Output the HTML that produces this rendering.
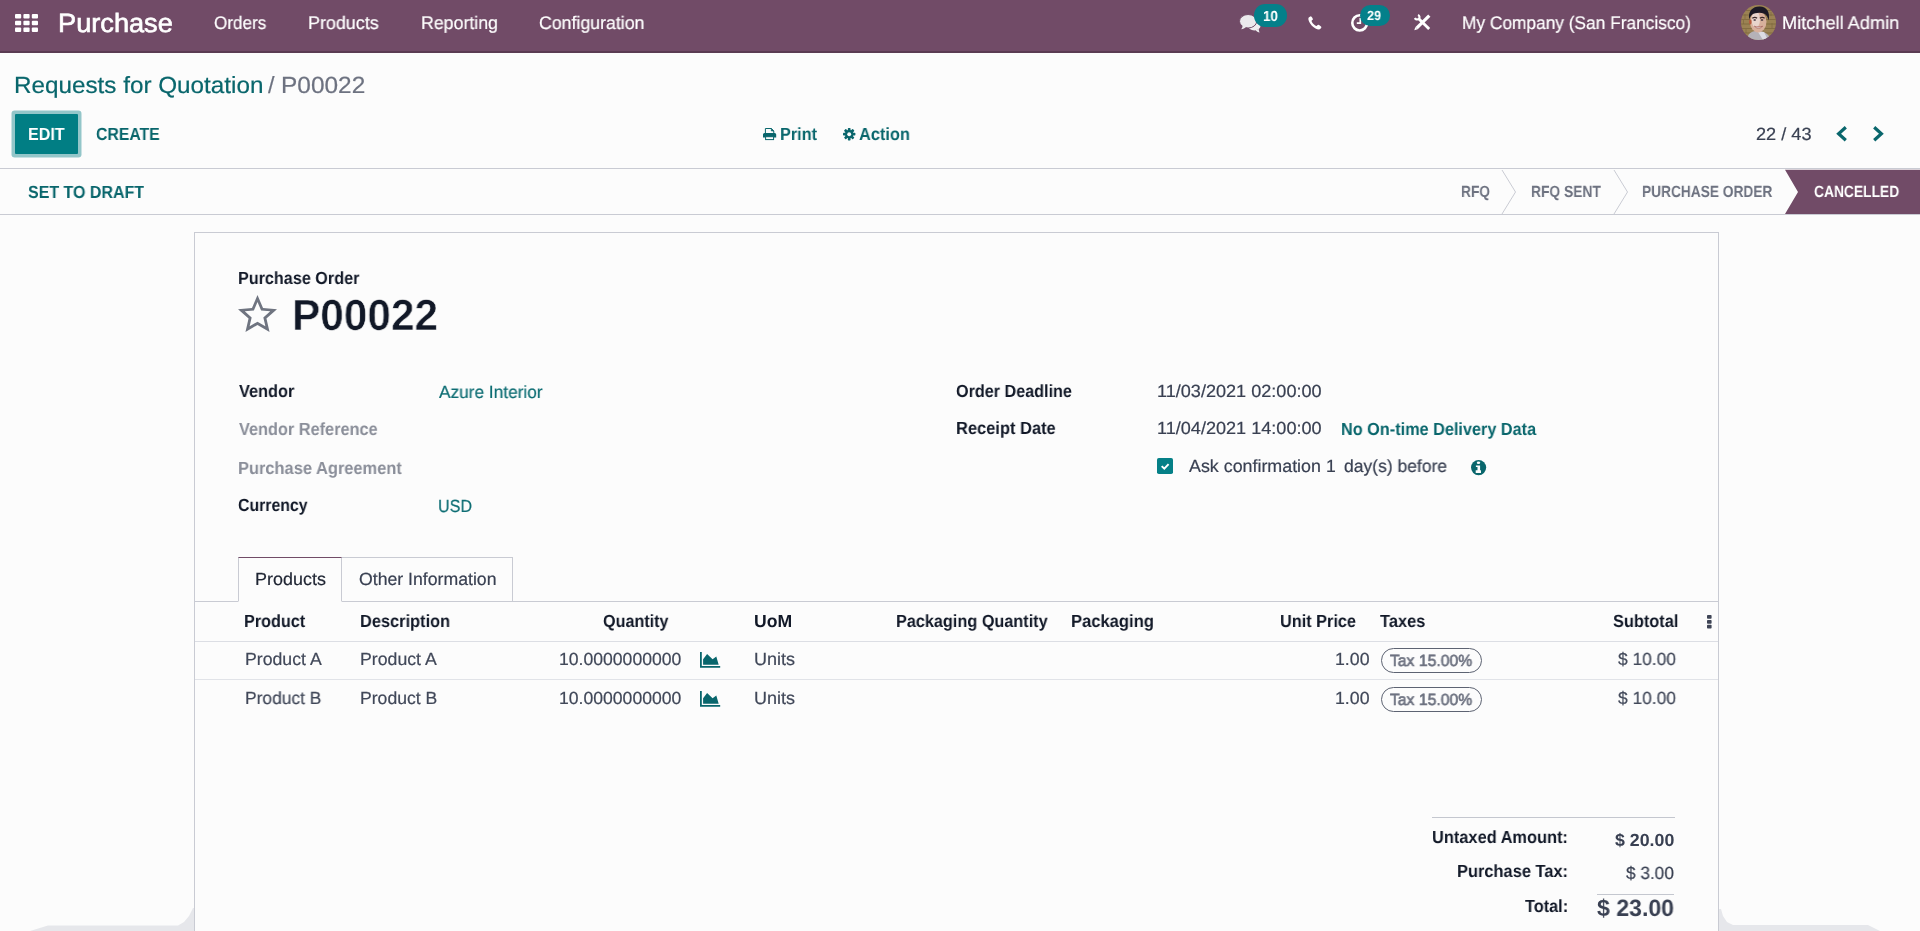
<!DOCTYPE html>
<html lang="en">
<head>
<meta charset="utf-8">
<title>Odoo - P00022</title>
<style>
*{box-sizing:border-box;margin:0;padding:0}
html,body{width:1920px;height:931px;overflow:hidden}
body{position:relative;background:#fcfcfc;font-family:"Liberation Sans",sans-serif;color:#3f4556}
.t{position:absolute;white-space:nowrap;line-height:1.2;font-weight:400;font-kerning:normal;text-rendering:geometricPrecision;transform-origin:0 0;-webkit-text-stroke:.2px currentColor;will-change:transform}
.m{font-weight:700}
.m,.b{-webkit-text-stroke:0}
#edit,#s4,#b10,#b29{-webkit-text-stroke:0}
.h{-webkit-text-stroke:.65px currentColor}
#name{-webkit-text-stroke:.55px #fcfcfc}
.b{font-weight:700}
.abs{position:absolute}
svg{position:absolute;overflow:visible}
/* navbar */
.navbar-bg{position:absolute;left:0;top:0;width:1920px;height:53px;background:#714b67;border-bottom:2px solid #5a3b52}
/* control panel */
.cp-bg{position:absolute;left:0;top:53px;width:1920px;height:116px;border-bottom:1px solid #c9cbd3}
.btn-edit{position:absolute;left:15px;top:114px;width:63px;height:40px;background:#017e84;border-radius:1px;box-shadow:0 0 0 3.5px #93c6c9}
/* status bar */
.statusbar-bg{position:absolute;left:0;top:169px;width:1920px;height:46px;border-bottom:1px solid #c9cbd3}
/* sheet */
.sheet-bg{position:absolute;left:194px;top:232px;width:1525px;height:720px;border:1px solid #c9cbd3;background:#fcfcfc}
.tabline{position:absolute;left:195px;top:601px;width:1523px;height:1px;background:#c9cbd3}
.tab{position:absolute;top:557px;height:45px;border:1px solid #c9cbd3}
.tab.active{left:238px;width:104px;border-top-color:#714b67;border-bottom-color:#fcfcfc;background:#fcfcfc}
.tab.other{left:341px;width:172px}
.hline{position:absolute;left:195px;width:1523px;height:1px;background:#e1e3e8}
.pill{position:absolute;left:1381px;width:101px;height:25px;border:1px solid #5d6372;border-radius:13px}
.check{position:absolute;left:1157.250px;top:458px;width:16.100px;height:16.100px;background:#058087;border-radius:1.800px}
.tot-line{position:absolute;height:1px;background:#c4c7cf}
#brand{left:57.77px;top:7.61px;font-size:26.4px;transform:scaleX(1.0299);color:#ffffff}
#m1{left:213.79px;top:12.41px;font-size:18.3px;transform:scaleX(0.9347);color:#ffffff}
#m2{left:307.93px;top:12.41px;font-size:18.3px;transform:scaleX(0.9801);color:#ffffff}
#m3{left:420.54px;top:12.41px;font-size:18.3px;transform:scaleX(0.9713);color:#ffffff}
#m4{left:538.70px;top:12.41px;font-size:18.3px;transform:scaleX(0.9697);color:#ffffff}
#b10{left:1262.85px;top:8.90px;font-size:14.6px;transform:scaleX(0.9242);color:#ffffff}
#b29{left:1367.46px;top:7.51px;font-size:13.3px;transform:scaleX(0.9464);color:#ffffff}
#comp{left:1462.18px;top:11.60px;font-size:18.3px;transform:scaleX(0.9466);color:#ffffff}
#user{left:1782.01px;top:11.60px;font-size:18.3px;transform:scaleX(0.9942);color:#ffffff}
#bc1{left:13.61px;top:71.40px;font-size:23.4px;transform:scaleX(1.0367);color:#09666c}
#bc2{left:267.60px;top:71.40px;font-size:23.4px;color:#6d7280}
#bc3{left:280.60px;top:71.40px;font-size:23.4px;transform:scaleX(1.0444);color:#6d7280}
#edit{left:27.52px;top:124.40px;font-size:17.6px;transform:scaleX(0.9145);color:#ffffff}
#create{left:96.35px;top:124.40px;font-size:17.6px;transform:scaleX(0.8963);color:#09666c}
#print{left:779.71px;top:124.01px;font-size:17.6px;transform:scaleX(0.9228);color:#09666c}
#action{left:859.09px;top:124.01px;font-size:17.6px;transform:scaleX(0.9304);color:#09666c}
#pager{left:1756.09px;top:123.81px;font-size:17.6px;transform:scaleX(1.0316);color:#394052}
#draft{left:27.79px;top:181.81px;font-size:17.6px;transform:scaleX(0.9093);color:#09666c}
#s1{left:1461.08px;top:182.91px;font-size:16.2px;transform:scaleX(0.8486);color:#6d7280}
#s2{left:1531.08px;top:182.91px;font-size:16.2px;transform:scaleX(0.8531);color:#6d7280}
#s3{left:1642.33px;top:182.91px;font-size:16.2px;transform:scaleX(0.8481);color:#6d7280}
#s4{left:1813.68px;top:182.91px;font-size:16.2px;transform:scaleX(0.8529);color:#ffffff}
#po{left:237.67px;top:268.26px;font-size:17.6px;transform:scaleX(0.9190);color:#111827}
#name{left:292.46px;top:289.81px;font-size:43.6px;transform:scaleX(0.9722);color:#111827}
#l1{left:238.64px;top:381.10px;font-size:17.6px;transform:scaleX(0.9282);color:#111827}
#v1{left:439.22px;top:382.01px;font-size:17.6px;transform:scaleX(0.9807);color:#0d6d73}
#l2{left:238.64px;top:419.01px;font-size:17.6px;transform:scaleX(0.9269);color:#8a8e99}
#l3{left:237.65px;top:457.90px;font-size:17.6px;transform:scaleX(0.9341);color:#8a8e99}
#l4{left:238.10px;top:495.01px;font-size:17.6px;transform:scaleX(0.8995);color:#111827}
#v4{left:438.01px;top:496.31px;font-size:17.6px;transform:scaleX(0.9154);color:#0d6d73}
#l5{left:956.34px;top:381.10px;font-size:17.6px;transform:scaleX(0.9193);color:#111827}
#v5{left:1156.87px;top:381.10px;font-size:17.6px;transform:scaleX(1.0279);color:#394052}
#l6{left:955.90px;top:418.31px;font-size:17.6px;transform:scaleX(0.9351);color:#111827}
#v6{left:1156.87px;top:418.31px;font-size:17.6px;transform:scaleX(1.0279);color:#394052}
#ontime{left:1340.81px;top:418.90px;font-size:17.6px;transform:scaleX(0.9237);color:#09666c}
#ask{left:1188.72px;top:456.21px;font-size:17.6px;transform:scaleX(1.0146);color:#394052}
#one{left:1325.66px;top:456.21px;font-size:17.6px;color:#394052}
#days{left:1343.66px;top:456.21px;font-size:17.6px;transform:scaleX(0.9948);color:#394052}
#t1{left:254.78px;top:569.01px;font-size:17.6px;transform:scaleX(1.0207);color:#1f2533}
#t2{left:358.66px;top:569.01px;font-size:17.6px;transform:scaleX(1.0042);color:#394052}
#h1{left:243.91px;top:611.01px;font-size:17.6px;transform:scaleX(0.9220);color:#111827}
#h2{left:360.15px;top:611.01px;font-size:17.6px;transform:scaleX(0.9309);color:#111827}
#h3{left:602.59px;top:611.01px;font-size:17.6px;transform:scaleX(0.9179);color:#111827}
#h4{left:753.95px;top:611.01px;font-size:17.6px;transform:scaleX(0.9895);color:#111827}
#h5{left:896.41px;top:611.01px;font-size:17.6px;transform:scaleX(0.9234);color:#111827}
#h6{left:1071.39px;top:611.01px;font-size:17.6px;transform:scaleX(0.9427);color:#111827}
#h7{left:1280.27px;top:611.01px;font-size:17.6px;transform:scaleX(0.9257);color:#111827}
#h8{left:1380.32px;top:611.01px;font-size:17.6px;transform:scaleX(0.9334);color:#111827}
#h9{left:1612.78px;top:611.01px;font-size:17.6px;transform:scaleX(0.9290);color:#111827}
#r1a{left:244.55px;top:648.65px;font-size:17.6px;transform:scaleX(1.0051);color:#414859}
#r1b{left:360.05px;top:648.51px;font-size:17.6px;transform:scaleX(1.0058);color:#414859}
#r1c{left:559.16px;top:648.51px;font-size:17.6px;color:#414859}
#r1d{left:754.11px;top:648.51px;font-size:17.6px;transform:scaleX(1.0236);color:#414859}
#r1e{left:1335.40px;top:648.51px;font-size:17.6px;transform:scaleX(1.0086);color:#414859}
#r1f{left:1390.40px;top:651.50px;font-size:16.2px;transform:scaleX(0.9713);color:#6d7280}
#r1g{left:1617.81px;top:648.51px;font-size:17.6px;transform:scaleX(0.9857);color:#414859}
#r2a{left:244.57px;top:687.76px;font-size:17.6px;transform:scaleX(0.9881);color:#414859}
#r2b{left:360.06px;top:687.76px;font-size:17.6px;transform:scaleX(0.9981);color:#414859}
#r2c{left:559.16px;top:687.76px;font-size:17.6px;color:#414859}
#r2d{left:754.11px;top:687.76px;font-size:17.6px;transform:scaleX(1.0236);color:#414859}
#r2e{left:1335.40px;top:687.76px;font-size:17.6px;transform:scaleX(1.0086);color:#414859}
#r2f{left:1390.40px;top:690.75px;font-size:16.2px;transform:scaleX(0.9713);color:#6d7280}
#r2g{left:1617.81px;top:687.76px;font-size:17.6px;transform:scaleX(0.9857);color:#414859}
#tl1{left:1432.32px;top:827.31px;font-size:17.6px;transform:scaleX(0.9314);color:#111827}
#tv1{left:1614.77px;top:829.81px;font-size:17.6px;transform:scaleX(1.0095);color:#394052}
#tl2{left:1457.20px;top:860.71px;font-size:17.6px;transform:scaleX(0.9336);color:#111827}
#tv2{left:1626.12px;top:862.81px;font-size:17.6px;transform:scaleX(0.9782);color:#394052}
#tl3{left:1525.12px;top:896.01px;font-size:17.6px;transform:scaleX(0.9261);color:#111827}
#tv3{left:1597.20px;top:894.81px;font-size:23.6px;transform:scaleX(0.9786);color:#394052}
</style>
</head>
<body>

<header class="navbar">
  <div class="navbar-bg"></div>
  <svg style="left:14.6px;top:13.6px" width="23" height="18" viewBox="0 0 23 18" fill="#fff">
    <rect x="0" y="0" width="6.2" height="4.6" rx="1"/><rect x="8.4" y="0" width="6.2" height="4.6" rx="1"/><rect x="16.8" y="0" width="6.2" height="4.6" rx="1"/>
    <rect x="0" y="6.7" width="6.2" height="4.6" rx="1"/><rect x="8.4" y="6.7" width="6.2" height="4.6" rx="1"/><rect x="16.8" y="6.7" width="6.2" height="4.6" rx="1"/>
    <rect x="0" y="13.4" width="6.2" height="4.6" rx="1"/><rect x="8.4" y="13.4" width="6.2" height="4.6" rx="1"/><rect x="16.8" y="13.4" width="6.2" height="4.6" rx="1"/>
  </svg>
  <span id="brand" class="t h">Purchase</span>
  <nav>
    <span id="m1" class="t">Orders</span>
    <span id="m2" class="t">Products</span>
    <span id="m3" class="t">Reporting</span>
    <span id="m4" class="t">Configuration</span>
  </nav>
  <!-- comments icon -->
  <svg style="left:1239.600px;top:14.600px" width="21" height="18" viewBox="0 0 21 18">
    <ellipse cx="14.300" cy="10.800" rx="6.300" ry="4.700" fill="#efedf0"/>
    <path d="M15.500 14.900c1.100 1.300 2.500 2.200 4.200 2.500-.7-.9-1-2-.9-3.400z" fill="#efedf0"/>
    <ellipse cx="8.100" cy="6.250" rx="8.600" ry="6.750" fill="#ebe9ec" stroke="#714b67" stroke-width="1"/>
    <path d="M2.700 10.300c-.1 1.600-.6 2.900-1.500 4 2-.3 3.700-1.200 5-2.500z" fill="#ebe9ec"/>
  </svg>
  <div class="abs" style="left:1253.900px;top:4.300px;width:33.300px;height:22.600px;border-radius:11.300px;background:#04808a"></div>
  <span id="b10" class="t b">10</span>
  <!-- phone -->
  <svg style="left:1308.400px;top:15.700px" width="13.800" height="13.800" viewBox="0 0 14 14" fill="#fff">
    <path d="M3 .3C2.300.3.600 1.300.4 2.400.1 4.200 1.300 7.100 3.900 9.800c2.700 2.700 5.700 4.100 7.500 3.800 1.100-.2 2.200-1.800 2.200-2.500 0-.4-2.500-2.100-3.100-2.200-.6-.1-1.300 1.200-1.900 1.200-.8 0-2.300-1.200-3.300-2.200s-1.800-2.300-1.700-3c.1-.6 1.400-1 1.400-1.600C5 2.800 3.500.3 3 .3z"/>
  </svg>
  <!-- clock -->
  <svg style="left:1351px;top:14px" width="17.400" height="17.800" viewBox="0 0 17.400 17.800" fill="none" stroke="#fff">
    <ellipse cx="8.700" cy="8.900" rx="7.400" ry="7.600" stroke-width="2.600"/>
    <path d="M9.300 4v5.200H5.800" stroke-width="1.700"/>
  </svg>
  <div class="abs" style="left:1359.500px;top:5px;width:30.800px;height:21px;border-radius:10.500px;background:#04808a"></div>
  <span id="b29" class="t b">29</span>
  <!-- tools -->
  <svg style="left:1413.500px;top:14.300px" width="17" height="16.500" viewBox="0 0 17 16.500" fill="none" stroke="#fff">
    <path d="M2.600 14.100L15.300 1.700" stroke-width="3.200"/>
    <path d="M.3 16.300l1.100-3.300 2.300 2.300z" fill="#fff" stroke="none"/>
    <path d="M4.500 4.500l10.700 10.500" stroke-width="2.900"/>
    <path d="M4 .9A2.400 2.400 0 1 1 .9 4" stroke-width="2.100"/>
  </svg>
  <span id="comp" class="t">My Company (San Francisco)</span>
  <!-- avatar -->
  <svg style="left:1741.200px;top:4.900px" width="35" height="35" viewBox="0 0 35 35">
    <defs><clipPath id="av"><circle cx="17.500" cy="17.500" r="17.500"/></clipPath></defs>
    <g clip-path="url(#av)">
      <rect width="35" height="35" fill="#9b8253"/>
      <path d="M0 5.500h35M0 10h35M0 14.500h35M0 19h35M0 23.500h35M0 28h35" stroke="#7c663d" stroke-width="1.100" opacity=".75"/>
      <path d="M4 9v5M30 7v4M2.500 15v4M31 18v5M5 24v4" stroke="#7c663d" stroke-width="1" opacity=".6"/>
      <path d="M6 35c.5-6 4-9.500 11-9.300 6 .2 11 3.300 13 9.300z" fill="#b5b2b8"/>
      <path d="M17 27l5 8h5l-4-8z" fill="#dcdce2"/>
      <ellipse cx="17.200" cy="16.600" rx="8.300" ry="10.800" fill="#d8b09c"/>
      <ellipse cx="14.800" cy="14.500" rx="4.200" ry="8" fill="#efe0dc" opacity=".75"/>
      <ellipse cx="9.300" cy="17" rx="1.300" ry="2.400" fill="#b8583c"/>
      <path d="M8.300 14.500C6.500 5.500 12.500 1 19 1.400c6.500.4 10.300 5 8.700 14.100-.8-3.500-2.200-5.900-4.400-6.800-4.300-1.600-9.800-.8-12 .9-1.600 1.300-2.400 2.900-3 4.900z" fill="#1c1924"/>
      <path d="M11.300 13.200c1.500-.9 3.500-.9 4.800 0M18.800 13.200c1.500-.9 3.500-.9 4.800 0" stroke="#3b2a2a" stroke-width="1.300" fill="none"/>
      <ellipse cx="13.700" cy="15" rx="1.300" ry=".8" fill="#2b2230"/><ellipse cx="21" cy="15" rx="1.300" ry=".8" fill="#2b2230"/>
      <path d="M13.300 21.200c2.300 2.600 6.300 2.600 8.300 0-2.500.9-5.800.9-8.300 0z" fill="#f4eeee" stroke="#9a4a44" stroke-width=".6"/>
    </g>
  </svg>
  <span id="user" class="t">Mitchell Admin</span>
</header>

<section class="control-panel">
<div class="cp-bg"></div>
<nav class="breadcrumb">
  <span id="bc1" class="t">Requests for Quotation</span>
  <span id="bc2" class="t">/</span>
  <span id="bc3" class="t">P00022</span>
</nav>
<div class="btn-edit"></div>
<span id="edit" class="t m">EDIT</span>
<span id="create" class="t m">CREATE</span>
<!-- printer -->
<svg style="left:762.600px;top:128.100px" width="13.200" height="12.100" viewBox="0 0 13.200 12.100" fill="#09666c" stroke="#09666c">
  <path d="M2.400 5.500V.5h5.900l2.500 2.500v2.500" fill="none" stroke-width="1"/>
  <path d="M8.300.5v2.500h2.500z" stroke-width=".6"/>
  <path d="M1.500 5h10.200a1.500 1.500 0 0 1 1.500 1.500v3H0v-3A1.500 1.500 0 0 1 1.500 5z" stroke="none"/>
  <rect x="2.600" y="8.700" width="8" height="2.900" fill="#fcfcfc" stroke-width="1"/>
</svg>
<span id="print" class="t m">Print</span>
<!-- gear -->
<svg style="left:843.150px;top:127.900px" width="12.400" height="12.400" viewBox="-6.200 -6.200 12.400 12.400">
  <g fill="#09666c">
    <circle r="4.100"/>
    <rect x="-1.350" y="-6.200" width="2.700" height="12.400" rx=".7"/>
    <rect x="-1.350" y="-6.200" width="2.700" height="12.400" rx=".7" transform="rotate(45)"/>
    <rect x="-1.350" y="-6.200" width="2.700" height="12.400" rx=".7" transform="rotate(90)"/>
    <rect x="-1.350" y="-6.200" width="2.700" height="12.400" rx=".7" transform="rotate(135)"/>
  </g>
  <circle r="1.950" fill="#fcfcfc"/>
</svg>
<span id="action" class="t m">Action</span>
<span id="pager" class="t">22 / 43</span>
<svg style="left:1836px;top:126px" width="12" height="15.500" viewBox="0 0 12 15.500" fill="none" stroke="#09666c" stroke-width="3.200"><path d="M9.800 1.200L2.600 7.750l7.200 6.550"/></svg>
<svg style="left:1872.400px;top:126px" width="12" height="15.500" viewBox="0 0 12 15.500" fill="none" stroke="#09666c" stroke-width="3.200"><path d="M2.200 1.200l7.200 6.550-7.200 6.550"/></svg>

</section>

<section class="statusbar">
<div class="statusbar-bg"></div>
<span id="draft" class="t m">SET TO DRAFT</span>
<svg style="left:0;top:169px" width="1920" height="46" viewBox="0 0 1920 46">
  <path d="M1502 1l13.500 22L1502 45" fill="none" stroke="#c9cbd3" stroke-width="1"/>
  <path d="M1614 1l13.500 22L1614 45" fill="none" stroke="#c9cbd3" stroke-width="1"/>
  <path d="M1785 .8h135V45h-135l13-22.100z" fill="#714b67"/>
</svg>
<span id="s1" class="t m">RFQ</span>
<span id="s2" class="t m">RFQ SENT</span>
<span id="s3" class="t m">PURCHASE ORDER</span>
<span id="s4" class="t m">CANCELLED</span>

</section>

<main class="sheet">
<div class="sheet-bg"></div>
<span id="po" class="t m">Purchase Order</span>
<!-- star -->
<svg style="left:238px;top:294.700px" width="39" height="37.100" viewBox="0 0 39 37.100" fill="#6f7480" fill-rule="evenodd">
  <path d="M19.50 0.00L25.03 12.90L39.00 14.17L28.44 23.40L31.55 37.08L19.50 29.90L7.45 37.08L10.56 23.40L0.00 14.17L13.97 12.90zM19.50 7.11L23.11 15.53L32.24 16.36L25.34 22.40L27.37 31.33L19.50 26.64L11.63 31.33L13.66 22.40L6.76 16.36L15.89 15.53z"/>
</svg>
<h1 id="name" class="t b">P00022</h1>

<div class="field-group">
<span id="l1" class="t m">Vendor</span><span id="v1" class="t">Azure Interior</span>
<span id="l2" class="t m">Vendor Reference</span>
<span id="l3" class="t m">Purchase Agreement</span>
<span id="l4" class="t m">Currency</span><span id="v4" class="t">USD</span>
<span id="l5" class="t m">Order Deadline</span><span id="v5" class="t">11/03/2021 02:00:00</span>
<span id="l6" class="t m">Receipt Date</span><span id="v6" class="t">11/04/2021 14:00:00</span>
<span id="ontime" class="t m">No On-time Delivery Data</span>
<div class="check"><svg style="left:0;top:0" width="16.100" height="16.100" viewBox="0 0 16.100 16.100" fill="none" stroke="#fff" stroke-width="2"><path d="M4.700 8.100l2.600 2.500 4.300-4.500"/></svg></div>
<span id="ask" class="t">Ask confirmation</span>
<span id="one" class="t">1</span>
<span id="days" class="t">day(s) before</span>
<!-- info -->
<svg style="left:1471.100px;top:459.750px" width="15.200" height="15.200" viewBox="0 0 15.200 15.200">
  <circle cx="7.600" cy="7.600" r="7.600" fill="#09666c"/>
  <ellipse cx="7.500" cy="2.850" rx="1.700" ry="1.250" fill="#fcfcfc"/>
  <path d="M4.900 5.400h4.200v4.800h.9v2.700H4.700v-2.700h1.800V7H4.900z" fill="#fcfcfc"/>
</svg>

</div>
<nav class="tabs">
<div class="tabline"></div>
<div class="tab other"></div>
<div class="tab active"></div>
<span id="t1" class="t">Products</span>
<span id="t2" class="t">Other Information</span>

</nav>
<div class="list-table" role="table">
<div class="thead" role="row">
<span id="h1" class="t m">Product</span>
<span id="h2" class="t m">Description</span>
<span id="h3" class="t m">Quantity</span>
<span id="h4" class="t m">UoM</span>
<span id="h5" class="t m">Packaging Quantity</span>
<span id="h6" class="t m">Packaging</span>
<span id="h7" class="t m">Unit Price</span>
<span id="h8" class="t m">Taxes</span>
<span id="h9" class="t m">Subtotal</span>
<svg style="left:1706.800px;top:614.500px" width="5" height="14" viewBox="0 0 5 14" fill="#3f4556"><rect width="4.600" height="3.800" rx=".8"/><rect y="4.900" width="4.600" height="3.800" rx=".8"/><rect y="9.800" width="4.600" height="3.800" rx=".8"/></svg>
<div class="hline" style="top:640.5px;height:1.500px;background:#dcdee4"></div>

</div>
<div class="row" role="row">
<span id="r1a" class="t">Product A</span>
<span id="r1b" class="t">Product A</span>
<span id="r1c" class="t">10.0000000000</span>
<svg style="left:700px;top:651.900px" width="20.200" height="15.700" viewBox="0 0 20.200 15.700" fill="#09666c"><path d="M0 0h1.800v14.100h18.400v1.600H0z"/><path d="M3.100 12.800V7.300l4-5.200 5.500 5.200 3.700-2.900 2.400 8.400z"/></svg>
<span id="r1d" class="t">Units</span>
<span id="r1e" class="t">1.00</span>
<div class="pill" style="top:647.5px"></div>
<span id="r1f" class="t h">Tax 15.00%</span>
<span id="r1g" class="t">$ 10.00</span>
<div class="hline" style="top:679px"></div>

</div>
<div class="row" role="row">
<span id="r2a" class="t">Product B</span>
<span id="r2b" class="t">Product B</span>
<span id="r2c" class="t">10.0000000000</span>
<svg style="left:700px;top:691.150px" width="20.200" height="15.700" viewBox="0 0 20.200 15.700" fill="#09666c"><path d="M0 0h1.800v14.100h18.400v1.600H0z"/><path d="M3.100 12.800V7.300l4-5.200 5.500 5.200 3.700-2.900 2.400 8.400z"/></svg>
<span id="r2d" class="t">Units</span>
<span id="r2e" class="t">1.00</span>
<div class="pill" style="top:687px"></div>
<span id="r2f" class="t h">Tax 15.00%</span>
<span id="r2g" class="t">$ 10.00</span>

</div>
</div>
<div class="totals">
<div class="tot-line" style="left:1432px;top:816.500px;width:243px"></div>
<span id="tl1" class="t m">Untaxed Amount:</span><span id="tv1" class="t b">$ 20.00</span>
<span id="tl2" class="t m">Purchase Tax:</span><span id="tv2" class="t">$ 3.00</span>
<div class="tot-line" style="left:1597px;top:893.700px;width:77px"></div>
<span id="tl3" class="t m">Total:</span><span id="tv3" class="t b">$ 23.00</span>

</div>
<svg style="left:0;top:900px" width="1920" height="31" viewBox="0 900 1920 31" fill="#e6e7eb">
  <path d="M30 931l18-5.500h130l6-3.500 5-6 4-8h1v23z"/>
  <path d="M1719 931v-22h2l2 7 4 6 6 3h135l12 6z"/>
</svg>
</main>
</body>
</html>
